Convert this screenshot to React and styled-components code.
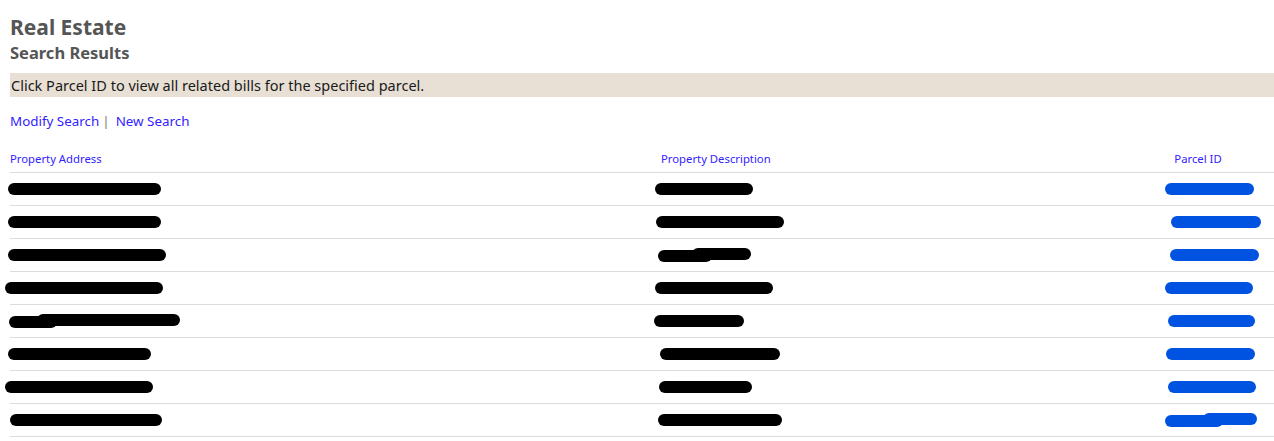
import React from 'react';
import styled, { createGlobalStyle } from 'styled-components';

const GlobalStyle = createGlobalStyle`
  html, body {
    margin: 0;
    padding: 0;
    background: #fff;
    overflow: hidden;
  }
  body {
    font-family: "Segoe UI", "Noto Sans", "Open Sans", sans-serif;
  }
`;

const Page = styled.div`
  padding: 13px 0 0 10px;
`;

const Title = styled.h1`
  margin: 0;
  font-size: 21px;
  line-height: 28px;
  font-weight: 700;
  color: #555555;
`;

const SubTitle = styled.h2`
  margin: 1px 0 9px;
  font-size: 16.5px;
  line-height: 22px;
  font-weight: 700;
  color: #555555;
`;

const Banner = styled.div`
  background: #e8e0d5;
  color: #1a1a1a;
  font-size: 14.5px;
  line-height: 24px;
  padding-left: 1px;
`;

const LinkBar = styled.div`
  margin-top: 12px;
  font-size: 13.4px;
  line-height: 24px;
  color: #555;
`;

const NavLink = styled.a`
  color: #3322ff;
  text-decoration: none;
  cursor: pointer;
`;

const Separator = styled.span`
  margin: 0 6px 0 3px;
  color: #777;
`;

const Table = styled.div`
  margin-top: 12px;
`;

const Row = styled.div`
  display: grid;
  grid-template-columns: 651px 1fr 152px;
  align-items: center;
  height: ${(p) => (p.$head ? '27px' : '32px')};
  border-bottom: 1px solid #dcdcdc;
`;

const HeadCell = styled.a`
  font-size: 11.3px;
  color: #3322ff;
  text-decoration: none;
  text-align: ${(p) => (p.$center ? 'center' : 'left')};
  padding-bottom: 1px;
`;

const Cell = styled.div`
  display: flex;
  align-items: center;
  min-width: 0;
`;

const Scribble = ({ width, color, split, offset }) => {
  const h = 14;
  const y = 7;
  return (
    <svg
      width={width}
      height={h}
      style={{ marginLeft: offset, overflow: 'visible' }}
      viewBox={`0 0 ${width} ${h}`}
    >
      {split ? (
        <>
          <line x1="6" y1={y + 1} x2={split} y2={y + 1} stroke={color} strokeWidth="12" strokeLinecap="round" />
          <line x1={split - 8} y1={y - 1} x2={width - 6} y2={y - 1} stroke={color} strokeWidth="12" strokeLinecap="round" />
        </>
      ) : (
        <line x1="6" y1={y} x2={width - 6} y2={y} stroke={color} strokeWidth="12" strokeLinecap="round" />
      )}
    </svg>
  );
};

const BLACK = '#000';
const BLUE = '#0052e0';

const rows = [
  { a: [-2, 153], d: [-6, 98], p: [43, 89] },
  { a: [-2, 153], d: [-5, 128], p: [49, 90] },
  { a: [-2, 158], d: [-3, 93, 48], p: [48, 89] },
  { a: [-5, 158], d: [-6, 118], p: [43, 88] },
  { a: [-1, 171, 42], d: [-7, 90], p: [46, 87] },
  { a: [-2, 143], d: [-1, 120], p: [44, 89] },
  { a: [-5, 148], d: [-2, 93], p: [46, 88] },
  { a: [0, 152], d: [-3, 124], p: [43, 92, 52] },
];

export default function App() {
  return (
    <Page>
      <GlobalStyle />
      <Title>Real Estate</Title>
      <SubTitle>Search Results</SubTitle>
      <Banner>Click Parcel ID to view all related bills for the specified parcel.</Banner>
      <LinkBar>
        <NavLink>Modify Search</NavLink>
        <Separator>|</Separator>
        <NavLink>New Search</NavLink>
      </LinkBar>
      <Table>
        <Row $head>
          <HeadCell>Property Address</HeadCell>
          <HeadCell>Property Description</HeadCell>
          <HeadCell $center>Parcel ID</HeadCell>
        </Row>
        {rows.map((r, i) => (
          <Row key={i}>
            <Cell>
              <Scribble offset={r.a[0]} width={r.a[1]} split={r.a[2]} color={BLACK} />
            </Cell>
            <Cell>
              <Scribble offset={r.d[0]} width={r.d[1]} split={r.d[2]} color={BLACK} />
            </Cell>
            <Cell>
              <Scribble offset={r.p[0]} width={r.p[1]} split={r.p[2]} color={BLUE} />
            </Cell>
          </Row>
        ))}
      </Table>
    </Page>
  );
}
